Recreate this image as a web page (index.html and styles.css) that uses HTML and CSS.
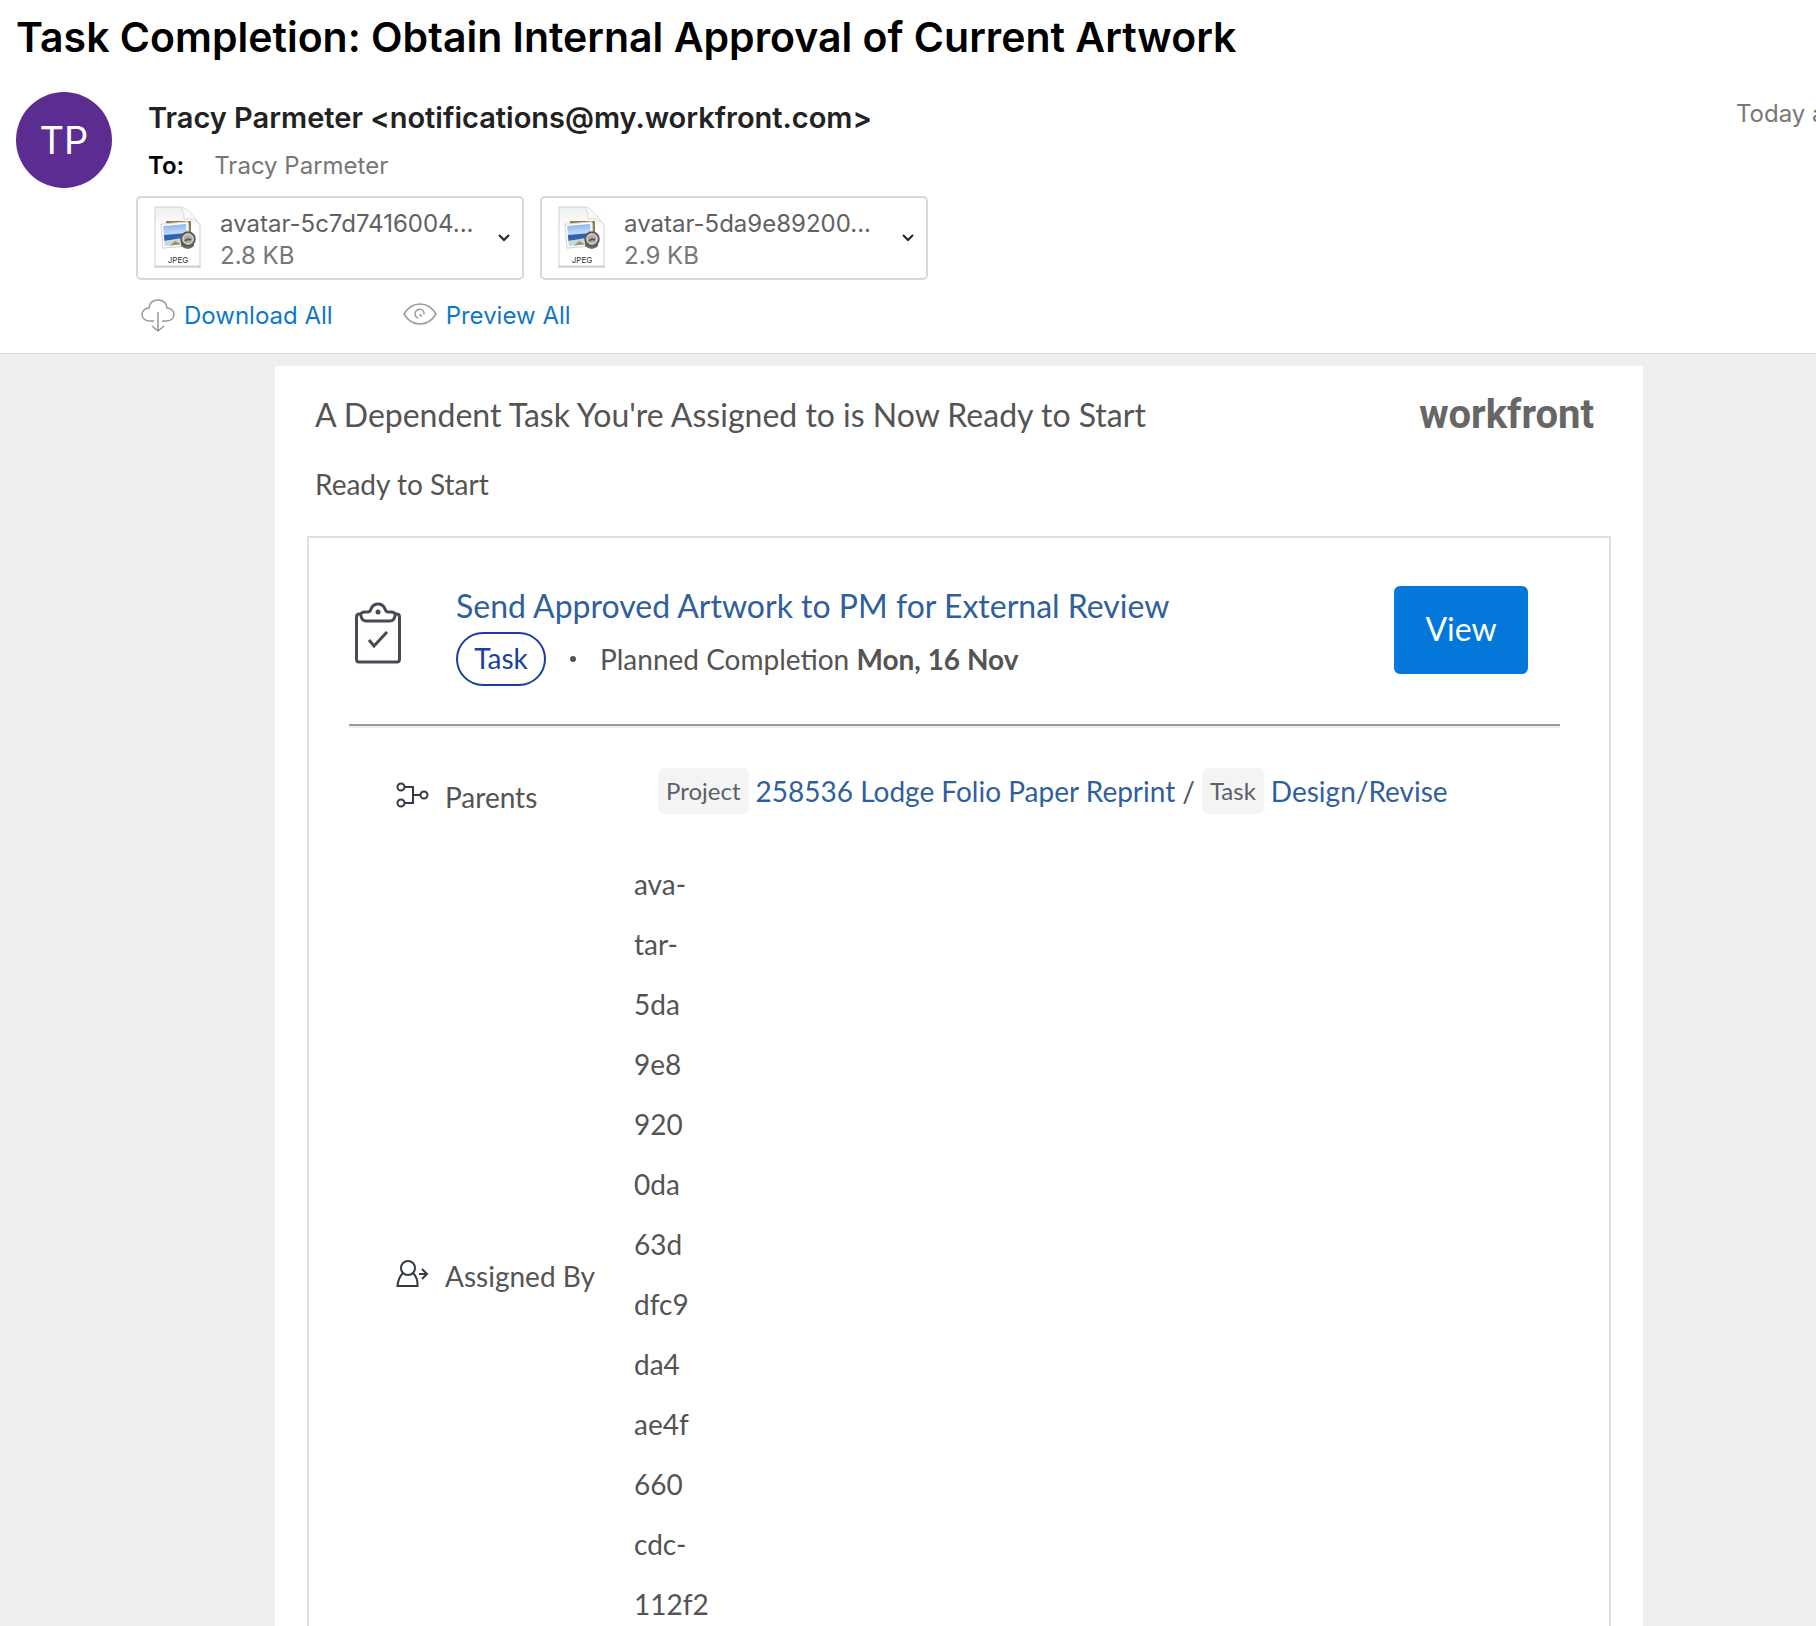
FILE: index.html
```
<!DOCTYPE html>
<html lang="en">
<head>
  <meta charset="UTF-8">
  <meta name="viewport" content="width=device-width, initial-scale=1.0">
  <title>Task Completion: Obtain Internal Approval of Current Artwork</title>
  <link rel="stylesheet" href="styles.css">
</head>
<body>
  <svg class="defs" aria-hidden="true">
    <defs>
      <linearGradient id="paper" x1="0" y1="0" x2="0" y2="1">
        <stop offset="0" stop-color="#f0f0f0"/>
        <stop offset="0.4" stop-color="#ffffff"/>
      </linearGradient>
      <linearGradient id="sky" x1="0" y1="0" x2="0" y2="1">
        <stop offset="0" stop-color="#8fb8f5"/>
        <stop offset="1" stop-color="#d3e6fb"/>
      </linearGradient>
      <symbol id="jpeg-file" viewBox="0 0 50 64">
        <path d="M2 1H30Q36 6 47 20V60H2Z" fill="url(#paper)"/>
        <path d="M2 1H28Q34 1 47 19V60H2Z" fill="none" stroke="#d0d0d0"/>
        <path d="M28 1Q34 1 47 19Q40 11 31 13Q32 6 28 1Z" fill="#fafafa" stroke="#dddddd"/>
        <path d="M1 61H48" stroke="#b8b8b8"/>
        <rect x="13" y="15" width="25" height="22" fill="#9a7b45"/>
        <rect x="15" y="17" width="21" height="18" fill="#d9c08c"/>
        <g transform="rotate(-5 22 30)">
          <rect x="9" y="17" width="27" height="24" fill="#ffffff" stroke="#d4d4d4"/>
          <rect x="11" y="19" width="23" height="11" fill="url(#sky)"/>
          <rect x="11" y="28" width="23" height="6" fill="#2f62b5"/>
          <path d="M11 34L34 32V39H11Z" fill="#c8d8dc"/>
          <path d="M16 39L22 35L27 39Z" fill="#a68c67"/>
        </g>
        <path d="M28 35V40Q35 46 41 40V33Z" fill="#75695a"/>
        <circle cx="35" cy="33" r="7" fill="#92877a" stroke="#55585b" stroke-width="1.5"/>
        <circle cx="35" cy="33" r="5" fill="#a9afb3" stroke="#e4e4e4"/>
        <path d="M32 35Q35 32 38 34" fill="none" stroke="#6d5233" stroke-width="2"/>
        <text x="25" y="57" class="file-type">JPEG</text>
      </symbol>
    </defs>
  </svg>

  <header class="mail-header">
    <h1>Task Completion: Obtain Internal Approval of Current Artwork</h1>
    <div class="mail-meta">
      <div class="avatar">TP</div>
      <div class="mail-details">
        <div class="sender">Tracy Parmeter &lt;notifications@my.workfront.com&gt;</div>
        <div class="recipient"><b>To:</b><span>Tracy Parmeter</span></div>
        <div class="attachments">
          <button class="attachment" type="button">
            <svg class="file-icon"><use href="#jpeg-file"/></svg>
            <span class="file-info"><span class="file-name">avatar-5c7d7416004...</span><span class="file-size">2.8 KB</span></span>
            <svg class="chevron" viewBox="0 0 12 8"><path d="M1 1L6 6L11 1"/></svg>
          </button>
          <button class="attachment" type="button">
            <svg class="file-icon"><use href="#jpeg-file"/></svg>
            <span class="file-info"><span class="file-name">avatar-5da9e89200...</span><span class="file-size">2.9 KB</span></span>
            <svg class="chevron" viewBox="0 0 12 8"><path d="M1 1L6 6L11 1"/></svg>
          </button>
        </div>
        <div class="file-actions">
          <a href="#">
            <svg class="action-icon" viewBox="0 0 34 34">
              <path d="M13 22H8C4 22 1 19 1 15.500C1 12 4 9 8 9C8 4 12 1 17 1C22 1 26 4 26 9C30 9 33 12 33 15.500C33 19 30 22 26 22H21M17 13V32M11 27L17 32L23 27"/>
            </svg>
            Download All
          </a>
          <a href="#">
            <svg class="action-icon" viewBox="0 0 34 34">
              <path d="M1 15Q7 5 17 5Q27 5 33 15Q27 25 17 25Q7 25 1 15Z"/>
              <path d="M15 19A4.500 4.500 0 1 1 21 15.500M17 15A2 2 0 0 0 19 17"/>
            </svg>
            Preview All
          </a>
        </div>
      </div>
      <div class="mail-date">Today a</div>
    </div>
  </header>

  <main class="mail-body">
    <section class="message">
      <div class="message-head">
        <h2>A Dependent Task You're Assigned to is Now Ready to Start</h2>
        <div class="logo">workfront</div>
      </div>
      <p class="status">Ready to Start</p>

      <div class="card">
        <div class="task">
          <svg class="task-icon" viewBox="0 0 46 62">
            <path d="M6 12H4Q1.500 12 1.500 15V57Q1.500 60 4 60H42Q44.500 60 44.500 57V15Q44.500 12 42 12H40"/>
            <path d="M10 10H13Q15 10 16 7Q18 2 23 2Q28 2 30 7Q31 10 33 10H36Q41 10 40 14Q39 19 35 19H11Q7 19 6 14Q5 10 10 10Z"/>
            <path d="M14 38L19 44L32 30"/>
            <circle cx="23" cy="10" r="2.500" class="dot"/>
          </svg>
          <div class="task-info">
            <a class="task-name" href="#">Send Approved Artwork to PM for External Review</a>
            <div class="task-line">
              <span class="pill">Task</span>
              <span class="bullet"></span>
              <span>Planned Completion <b>Mon, 16 Nov</b></span>
            </div>
          </div>
          <button class="view" type="button">View</button>
        </div>
        <hr>
        <table class="fields">
          <tr class="parents">
            <th scope="row">
              <div class="field">
                <svg class="field-icon" viewBox="0 0 34 28">
                  <circle cx="5" cy="6" r="3.500"/>
                  <circle cx="5" cy="22" r="3.500"/>
                  <circle cx="28" cy="14" r="3.500"/>
                  <path d="M9 6H17V22H9M17 14H24"/>
                </svg>
                <span>Parents</span>
              </div>
            </th>
            <td>
              <div class="path">
                <span class="tag">Project</span>
                <a href="#">258536 Lodge Folio Paper Reprint</a>
                <span>/</span>
                <span class="tag">Task</span>
                <a href="#">Design/Revise</a>
              </div>
            </td>
          </tr>
          <tr>
            <th scope="row">
              <div class="field">
                <svg class="field-icon" viewBox="0 0 34 28">
                  <circle cx="12" cy="8" r="7"/>
                  <path d="M7 13Q2 18 1.500 26H21.500Q22 18 17 13M23 14H30M26 9L31 14L26 19"/>
                </svg>
                <span>Assigned By</span>
              </div>
            </th>
            <td class="assigner">ava-<br>tar-<br>5da<br>9e8<br>920<br>0da<br>63d<br>dfc9<br>da4<br>ae4f<br>660<br>cdc-<br>112f2</td>
          </tr>
        </table>
      </div>
    </section>
  </main>
</body>
</html>
```
FILE: styles.css
```
* { box-sizing: border-box; }
body { margin: 0; height: 100vh; overflow: hidden; background-color: #eeeeee; font-family: Inter, 'Liberation Sans', sans-serif; }
a { text-decoration: none; }
button { font-family: inherit; cursor: pointer; }
svg { display: block; flex: none; }
.defs { width: 0; height: 0; position: absolute; }

.mail-header { background: #fff; border-bottom: 1px solid #dcdcdc; padding: 12px 0 19px 16px; }
h1 { margin: 0 0 30px; font-size: 41px; line-height: 50px; font-weight: 600; color: #000; white-space: nowrap; }
.mail-meta { display: flex; gap: 24px; }
.avatar { width: 96px; height: 96px; flex: none; border-radius: 50%; background: #5c2d91; color: #fff; font-size: 38px; display: flex; align-items: center; justify-content: center; }
.mail-details { flex: 1; }
.sender { padding: 8px 0 0 12px; font-size: 29px; line-height: 36px; font-weight: 600; color: #222; }
.recipient { display: flex; gap: 30px; padding: 12px 0 0 12px; font-size: 24px; line-height: 36px; color: #777; }
.recipient b { color: #000; font-weight: 600; }
.attachments { display: flex; gap: 16px; margin-top: 12px; }
.attachment { width: 388px; height: 84px; padding: 0 12px 0 15px; display: flex; align-items: center; gap: 17px; background: #fff; border: 2px solid #d8d8d8; border-radius: 5px; text-align: left; }
.file-icon { width: 50px; height: 64px; }
.file-type { font-family: Inter, sans-serif; font-size: 8px; text-anchor: middle; fill: #333; }
.file-info { flex: 1; padding-top: 4px; font-size: 24px; line-height: 32px; }
.file-name { display: block; color: #616161; white-space: nowrap; }
.file-size { display: block; color: #777; }
.chevron { width: 12px; height: 8px; fill: none; stroke: #222; stroke-width: 2; }
.file-actions { display: flex; gap: 70px; padding: 18px 0 0 5px; }
.file-actions a { display: flex; align-items: center; gap: 9px; font-size: 24px; line-height: 36px; color: #0f78c8; }
.action-icon { width: 34px; height: 34px; fill: none; stroke: #999; stroke-width: 1.5; }
.mail-date { width: 80px; flex: none; padding-top: 4px; font-size: 24px; line-height: 36px; color: #777; white-space: nowrap; overflow: hidden; }

.mail-body { padding: 12px 173px 0 275px; font-family: Lato, 'Liberation Sans', sans-serif; color: #545454; }
.message { background: #fff; padding: 29px 32px 0; font-size: 28px; line-height: 36px; }
.message-head { display: flex; justify-content: space-between; align-items: center; padding: 0 17px 0 8px; }
h2 { margin: 0; font-size: 32px; line-height: 40px; font-weight: 400; }
.logo { font-family: Roboto, sans-serif; font-size: 40px; line-height: 40px; font-weight: 700; color: #666; }
.status { margin: 31px 8px 34px; }
.card { border: 2px solid #dfdfdf; padding: 48px 49px 120px 40px; }
.task { display: flex; align-items: flex-start; padding: 0 32px 0 6px; }
.task-icon { width: 46px; height: 62px; margin: 16px 55px 0 0; fill: none; stroke: #474a54; stroke-width: 3; }
.task-icon .dot { fill: #474a54; stroke: none; }
.task-info { flex: 1; }
.task-name { display: block; font-size: 32px; line-height: 40px; color: #315f9c; }
.task-line { display: flex; align-items: center; margin-top: 6px; }
.pill { width: 90px; height: 54px; line-height: 48px; text-align: center; border: 2px solid #1a3f9f; border-radius: 27px; color: #1a3f9f; }
.bullet { width: 6px; height: 6px; margin: 0 24px; border-radius: 50%; background: #545454; }
.view { width: 134px; height: 88px; padding: 0 0 4px; border: 0; border-radius: 6px; background: #0378da; color: #fff; font-size: 32px; }
hr { margin: 38px 0 0; border: 0; border-top: 2px solid #999; border-bottom: 2px solid #eee; }
.fields { width: 100%; border-collapse: collapse; }
.fields th, .fields td { padding: 0; font-weight: 400; text-align: left; }
.fields th { width: 285px; padding-left: 47px; }
.parents { height: 126px; }
.parents .field { padding-top: 8px; }
.field { display: flex; align-items: center; gap: 15px; }
.field span { padding-top: 4px; }
.field-icon { width: 34px; height: 28px; fill: none; stroke: #343946; stroke-width: 2; }
.path { display: flex; align-items: center; gap: 7px; padding-left: 24px; white-space: nowrap; }
.path a { color: #315f9c; }
.tag { padding: 0 8px; font-size: 24px; line-height: 46px; border-radius: 6px; background: #f4f4f4; color: #5c5f68; }
/* blank last line under the file name */
.fields .assigner { padding-bottom: 60px; line-height: 60px; }
```
